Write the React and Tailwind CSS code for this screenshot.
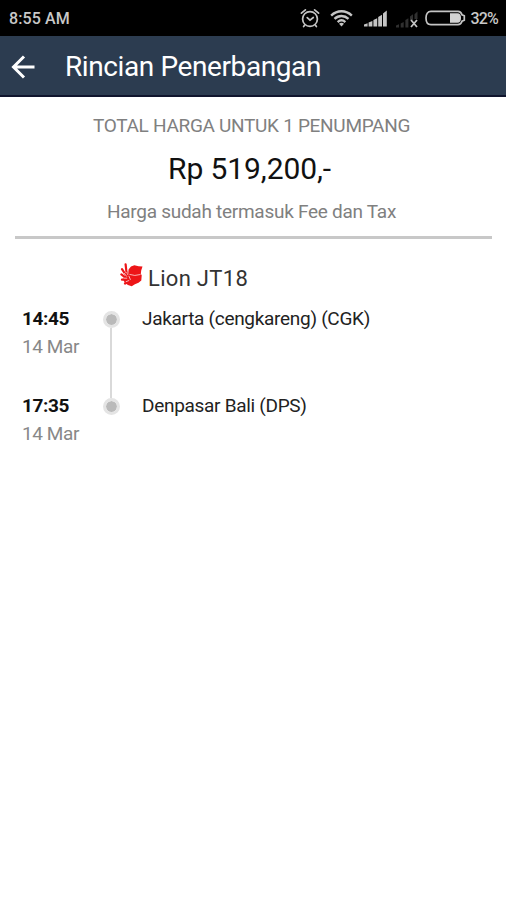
const stops = [
  { time: '14:45', date: '14 Mar', place: 'Jakarta (cengkareng) (CGK)' },
  { time: '17:35', date: '14 Mar', place: 'Denpasar Bali (DPS)' },
];

function AlarmIcon() {
  return (
    <svg width="20" height="20" viewBox="0 0 20 20" fill="none" stroke="#c4c4c4" strokeWidth="1.7" strokeLinecap="round">
      <circle cx="10" cy="11" r="7.4" />
      <path d="M1.4 5.2 5.4 1.8M18.6 5.2 14.6 1.8M4.5 17.4 3.6 18.5M15.5 17.4l.9 1.1" />
      <path d="m7.2 9.6 2.8 2.6 3.3-2.7" />
    </svg>
  );
}

function WifiIcon() {
  return (
    <svg width="23" height="18" viewBox="0 0 24 18" fill="none" stroke="#c4c4c4" strokeWidth="2.5">
      <path d="M1.2 6.4C7.6.4 16.4.4 22.8 6.4" />
      <path d="M4.7 9.9c4.2-4 10.4-4 14.6 0" />
      <path d="M8 13.2c2.4-2.2 5.6-2.2 8 0" />
      <path d="M9.4 15q2.6-2 5.2 0L12 17.8z" fill="#c4c4c4" stroke="none" />
    </svg>
  );
}

function SignalIcon() {
  return (
    <svg width="24" height="17" viewBox="0 0 24 17" fill="#c4c4c4">
      <path d="M0 16.5v-2l3.6-1.2v3.2zM4.6 16.5v-4L8.4 11v5.5zM9.4 16.5V10l3.8-1.8v8.3zM14.2 16.5V7L18 4.7v11.8zM19 16.5V3.5L22.8.5v16z" />
    </svg>
  );
}

function NoSignalIcon() {
  return (
    <svg width="23" height="17" viewBox="0 0 23 17">
      <path fill="#303030" d="M0 16.5v-2l3-1.2v3.2zM4.7 16.5v-4l3-1.5v5.5zM9.4 16.5V9l3-1.8v9.3zM14 9V5.5l3-2.3V9zM18.5 8V3.2L21.5.5V8z" />
      <path stroke="#c4c4c4" strokeWidth="1.8" d="m15 9 6 7M21 9l-6 7" />
    </svg>
  );
}

function BatteryIcon() {
  return (
    <svg width="41" height="16" viewBox="0 0 41 16" fill="none">
      <path d="M6 1.3h27c2.3 0 3.4 1.5 4 3.5l2.3 1v4.4l-2.3 1c-.6 2-1.7 3.5-4 3.5H6C2.7 14.7 1 12 1 8s1.7-6.7 5-6.7Z" stroke="#c4c4c4" strokeWidth="1.7" />
      <path d="M25 3.2h7.5c2.4 0 3.5 1.8 3.5 4.8s-1.1 4.8-3.5 4.8H25z" fill="#d4d4d4" />
    </svg>
  );
}

function LionLogo() {
  return (
    <svg width="23" height="24" viewBox="0 0 23 24">
      <path fill="#ed1518" d="M8.5 6.5 11 3.6l3.4-1.4 4.2 1 3.9.3-1.3 4-.4 3.2.9 1.5-.4 5.4-2.8 2.2-3.6 1.4-3.2 2.1-3.8-1.4-3-2.2-2.2-3.6 2.3-3.6z" />
      <path fill="none" stroke="#ed1518" strokeWidth="2.2" strokeLinecap="round" d="M5.6 1.3 6.4 8.5M2 6.2l3.5 5.3M1.4 11.4l4 3.2M2 16.6l4-.2M5 20.5l3-2" />
      <path fill="none" stroke="#fff" strokeWidth=".8" strokeOpacity=".85" d="M8.3 6.5 7.7 12M4 10l2.8 3.6M3.4 15.2h3.8M9.5 11.4q5 2 11 .1M8.8 12.8l1.7 4M5.8 18.8l3.4-1.4" />
    </svg>
  );
}

function StatusBar() {
  return (
    <div className="flex h-9 items-center bg-black pr-2 pl-[9px] text-[#c8c8c8]">
      <span className="pt-0.5 text-base font-medium tracking-[0.1px]">8:55 AM</span>
      <div className="ml-auto flex items-center">
        <AlarmIcon />
        <div className="ml-2.5 flex"><WifiIcon /></div>
        <div className="ml-[11px] flex"><SignalIcon /></div>
        <div className="ml-2 flex pt-0.5"><NoSignalIcon /></div>
        <div className="ml-1.5 flex"><BatteryIcon /></div>
        <span className="ml-1 pt-0.5 text-base font-medium tracking-[-0.8px]">32%</span>
      </div>
    </div>
  );
}

function Header() {
  return (
    <header className="flex h-[61px] items-center border-b-2 border-[#10152d] bg-[#2c3c50] pt-0.5 pl-[11px] text-white">
      <svg width="25" height="24" viewBox="0 0 25 24" fill="none" stroke="#fff" strokeWidth="3">
        <path d="M23.5 12H3M13 1.5 2.5 12 13 22.5" />
      </svg>
      <h1 className="ml-[29px] text-[28px] leading-8 tracking-[-0.4px]">Rincian Penerbangan</h1>
    </header>
  );
}

function Stop({ stop, last }) {
  return (
    <div className="flex h-[87px]">
      <div className="w-20 pl-[7px] text-[19px] leading-7">
        <p className="font-bold tracking-[-0.4px] text-[#111]">{stop.time}</p>
        <p className="tracking-[-0.4px] text-[#888]">{stop.date}</p>
      </div>
      <div className="flex w-8 flex-col items-center pt-1.5">
        <div className="size-[17px] shrink-0 rounded-full border-[3px] border-[#e4e4e4] bg-[#bababa] bg-clip-padding" />
        {!last && <div className="h-[70px] w-0.5 shrink-0 bg-[#d9d9d9]" />}
      </div>
      <p className="ml-[15px] text-[19px] leading-7 tracking-[-0.3px] text-[#222]">{stop.place}</p>
    </div>
  );
}

export default function App() {
  return (
    <div className="h-[900px] w-[506px] overflow-hidden bg-white font-['Roboto',sans-serif]">
      <StatusBar />
      <Header />
      <main className="pt-[15px] pr-3.5 pl-[15px]">
        <section className="flex flex-col items-center border-b-[3px] border-[#c8c8c8] pr-1 pb-[10px] whitespace-nowrap">
          <p className="text-[19px] leading-7 tracking-[-0.3px] text-[#808080]">TOTAL HARGA UNTUK 1 PENUMPANG</p>
          <p className="mt-[7px] pr-1 text-[30px] leading-[43px] tracking-[-0.1px] text-[#111]">Rp 519,200,-</p>
          <p className="mt-2 text-[19px] leading-7 tracking-[-0.27px] text-[#808080]">Harga sudah termasuk Fee dan Tax</p>
        </section>
        <div className="mt-6 flex h-[42px] items-start pl-[105px]">
          <LionLogo />
          <p className="ml-[5px] text-[22px] leading-8 tracking-[0.3px] text-[#333]">Lion JT18</p>
        </div>
        {stops.map((stop, i) => (
          <Stop key={stop.time} stop={stop} last={i === stops.length - 1} />
        ))}
      </main>
    </div>
  );
}
